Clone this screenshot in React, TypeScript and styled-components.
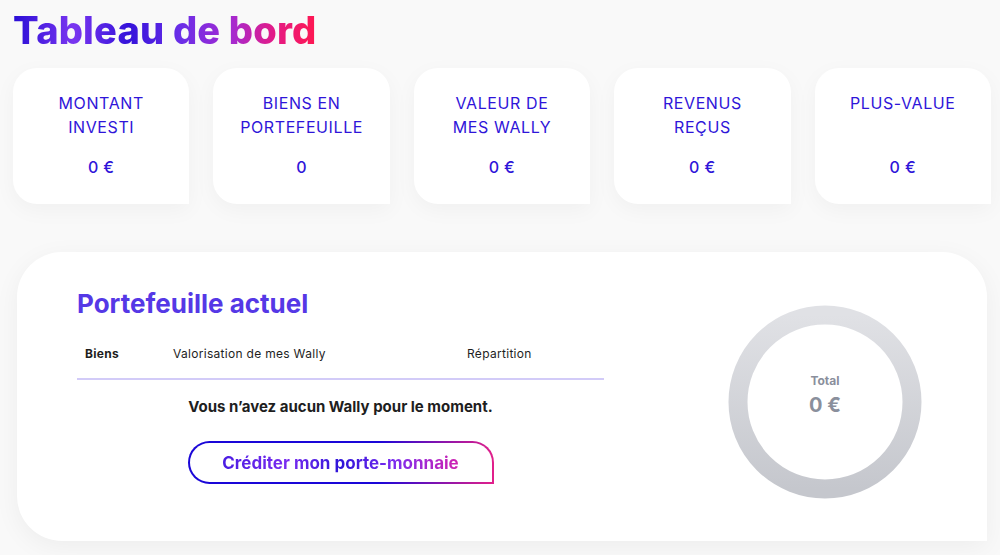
import React from "react";
import styled, { createGlobalStyle } from "styled-components";

const GlobalStyle = createGlobalStyle`
  body {
    margin: 0;
    background: #f9f9f9;
    font-family: 'Inter', 'Liberation Sans', sans-serif;
  }
`;

const stats = [
  { label: "MONTANT INVESTI", lines: ["MONTANT", "INVESTI"], value: "0 €" },
  { label: "BIENS EN PORTEFEUILLE", lines: ["BIENS EN", "PORTEFEUILLE"], value: "0" },
  { label: "VALEUR DE MES WALLY", lines: ["VALEUR DE", "MES WALLY"], value: "0 €" },
  { label: "REVENUS REÇUS", lines: ["REVENUS", "REÇUS"], value: "0 €" },
  { label: "PLUS-VALUE", lines: ["PLUS-VALUE"], value: "0 €" },
];

const App = () => {
  return (
    <Page>
      <GlobalStyle />
      <Title>Tableau de bord</Title>

      <StatsGrid>
        {stats.map((s) => (
          <StatCard key={s.label}>
            <StatLabel>
              {s.lines.map((l) => (
                <span key={l}>{l}</span>
              ))}
            </StatLabel>
            <StatValue>{s.value}</StatValue>
          </StatCard>
        ))}
      </StatsGrid>

      <Panel>
        <PortfolioColumn>
          <PanelTitle>Portefeuille actuel</PanelTitle>
          <TableHead>
            <HeadCell $bold>Biens</HeadCell>
            <HeadCell>Valorisation de mes Wally</HeadCell>
            <HeadCell>Répartition</HeadCell>
          </TableHead>
          <EmptyMessage>Vous n’avez aucun Wally pour le moment.</EmptyMessage>
          <CreditButton type="button">
            <GradientText>Créditer mon porte-monnaie</GradientText>
          </CreditButton>
        </PortfolioColumn>

        <Donut>
          <svg width="194" height="194" viewBox="0 0 194 194">
            <defs>
              <linearGradient id="ring" x1="0" y1="0" x2="0" y2="1">
                <stop offset="0%" stopColor="#e0e1e5" />
                <stop offset="100%" stopColor="#c5c7cd" />
              </linearGradient>
            </defs>
            <circle cx="97" cy="97" r="87" fill="none" stroke="url(#ring)" strokeWidth="19" />
          </svg>
          <DonutCenter>
            <DonutLabel>Total</DonutLabel>
            <DonutValue>0 €</DonutValue>
          </DonutCenter>
        </Donut>
      </Panel>
    </Page>
  );
};

const Page = styled.div`
  padding: 7px 9px 14px 13px;
`;

const Title = styled.h1`
  margin: 0 0 15px 0;
  font-size: 38px;
  line-height: 46px;
  font-weight: 800;
  letter-spacing: 0.2px;
  display: inline-block;
  background: linear-gradient(
    90deg,
    #2a0ed6 0%,
    #7a36f0 20%,
    #3412da 38%,
    #6a2ee8 55%,
    #a52ad0 72%,
    #e41b86 86%,
    #ff1750 100%
  );
  -webkit-background-clip: text;
  background-clip: text;
  color: transparent;
`;

const StatsGrid = styled.div`
  display: grid;
  grid-template-columns: repeat(5, 1fr);
  gap: 24px;
`;

const StatCard = styled.div`
  height: 136px;
  box-sizing: border-box;
  padding: 23px 6px 0;
  background: #fff;
  border-radius: 24px 24px 0 24px;
  box-shadow: 0 6px 22px rgba(0, 0, 0, 0.04);
  display: flex;
  flex-direction: column;
  align-items: center;
  color: #2f15d9;
  text-align: center;
`;

const StatLabel = styled.div`
  display: flex;
  flex-direction: column;
  min-height: 48px;
  font-size: 16px;
  line-height: 24px;
  font-weight: 400;
  letter-spacing: 0.6px;
`;

const StatValue = styled.div`
  margin-top: 16px;
  font-size: 16px;
  line-height: 24px;
  font-weight: 500;
  letter-spacing: 0.4px;
`;

const Panel = styled.div`
  margin: 48px 4px 0;
  height: 289px;
  box-sizing: border-box;
  background: #fff;
  border-radius: 45px 45px 0 45px;
  box-shadow: 0 6px 26px rgba(0, 0, 0, 0.05);
  padding: 36px 65px 0 60px;
  display: flex;
  justify-content: space-between;
  align-items: flex-start;
`;

const PortfolioColumn = styled.div`
  width: 527px;
  display: flex;
  flex-direction: column;
  align-items: center;
`;

const PanelTitle = styled.h2`
  align-self: flex-start;
  margin: 0 0 22px 0;
  font-size: 26px;
  line-height: 32px;
  font-weight: 700;
  color: #5538e6;
`;

const TableHead = styled.div`
  align-self: stretch;
  display: grid;
  grid-template-columns: 88px 294px 1fr;
  padding: 0 0 12px 8px;
  border-bottom: 2px solid #d2cbf8;
`;

const HeadCell = styled.div<{ $bold?: boolean }>`
  font-size: 12px;
  line-height: 24px;
  letter-spacing: 0.3px;
  font-weight: ${(p) => (p.$bold ? 700 : 400)};
  color: #1e1e1e;
`;

const EmptyMessage = styled.p`
  margin: 17px 0 0;
  font-size: 15px;
  line-height: 20px;
  font-weight: 700;
  color: #1e1e1e;
`;

const CreditButton = styled.button`
  margin-top: 24px;
  width: 306px;
  height: 43px;
  border: 2px solid transparent;
  border-radius: 22px 22px 0 22px;
  background:
    linear-gradient(#fff, #fff) padding-box,
    linear-gradient(90deg, #1a06d8 0%, #1a06d8 62%, #e2208a 100%) border-box;
  cursor: pointer;
  font-family: inherit;
`;

const GradientText = styled.span`
  font-size: 17px;
  font-weight: 700;
  background: linear-gradient(
    90deg,
    #4a1ce2 0%,
    #7a2cf0 28%,
    #2d14d8 50%,
    #7a2cf0 72%,
    #d023b0 100%
  );
  -webkit-background-clip: text;
  background-clip: text;
  color: transparent;
`;

const Donut = styled.div`
  position: relative;
  width: 194px;
  height: 194px;
  margin-top: 17px;
`;

const DonutCenter = styled.div`
  position: absolute;
  inset: 0;
  display: flex;
  flex-direction: column;
  align-items: center;
  justify-content: center;
  padding-bottom: 14px;
  box-sizing: border-box;
  color: #8a8f9c;
`;

const DonutLabel = styled.span`
  font-size: 12px;
  line-height: 16px;
  font-weight: 700;
`;

const DonutValue = styled.span`
  margin-top: 4px;
  font-size: 20px;
  line-height: 24px;
  font-weight: 700;
`;

export default App;
